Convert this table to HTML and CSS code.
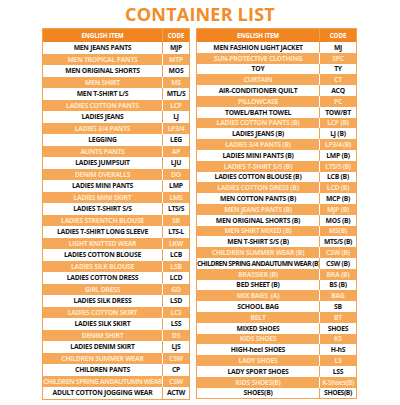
FILE: index.html
```html
<!DOCTYPE html>
<html lang="en">
<head>
    <meta charset="UTF-8">
    <meta name="viewport" content="width=device-width, initial-scale=1.0">
    <title>Container List</title>
    <link rel="stylesheet" href="styles.css">
</head>
<body>
    <h1 class="title">CONTAINER LIST</h1>
    <div class="tables">
        <table class="list list-left">
            <colgroup><col class="col-item"><col class="col-code"></colgroup>
            <thead><tr><th>ENGLISH ITEM</th><th>CODE</th></tr></thead>
            <tbody>
                <tr><td>MEN JEANS PANTS</td><td>MJP</td></tr>
                <tr><td>MEN TROPICAL PANTS</td><td>MTP</td></tr>
                <tr><td>MEN ORIGINAL SHORTS</td><td>MOS</td></tr>
                <tr><td>MEN SHIRT</td><td>MS</td></tr>
                <tr><td>MEN T-SHIRT L/S</td><td class="tight">MTL/S</td></tr>
                <tr><td>LADIES COTTON PANTS</td><td>LCP</td></tr>
                <tr><td>LADIES JEANS</td><td>LJ</td></tr>
                <tr><td>LADIES 3/4 PANTS</td><td class="tight">LP3/4</td></tr>
                <tr><td>LEGGING</td><td>LEG</td></tr>
                <tr><td>AUNTS PANTS</td><td>AP</td></tr>
                <tr><td>LADIES JUMPSUIT</td><td>LJU</td></tr>
                <tr><td>DENIM OVERALLS</td><td>DO</td></tr>
                <tr><td>LADIES MINI PANTS</td><td>LMP</td></tr>
                <tr><td>LADIES MINI SKIRT</td><td>LMS</td></tr>
                <tr><td>LADIES T-SHIRT S/S</td><td class="tight">LTS/S</td></tr>
                <tr><td>LADIES STRENTCH BLOUSE</td><td>SB</td></tr>
                <tr><td>LADIES T-SHIRT LONG SLEEVE</td><td class="tight">LTS-L</td></tr>
                <tr><td>LIGHT KNITTED WEAR</td><td>LKW</td></tr>
                <tr><td>LADIES COTTON BLOUSE</td><td>LCB</td></tr>
                <tr><td>LADIES SILK BLOUSE</td><td>LSB</td></tr>
                <tr><td>LADIES COTTON DRESS</td><td>LCD</td></tr>
                <tr><td>GIRL DRESS</td><td>GD</td></tr>
                <tr><td>LADIES SILK DRESS</td><td>LSD</td></tr>
                <tr><td>LADIES COTTON SKIRT</td><td>LCS</td></tr>
                <tr><td>LADIES SILK SKIRT</td><td>LSS</td></tr>
                <tr><td>DENIM SHIRT</td><td>DS</td></tr>
                <tr><td>LADIES DENIM SKIRT</td><td>LJS</td></tr>
                <tr><td>CHILDREN SUMMER WEAR</td><td>CSW</td></tr>
                <tr><td>CHILDREN PANTS</td><td>CP</td></tr>
                <tr><td class="tight">CHILDREN SPRING ANDAUTUMN WEAR</td><td>CSW</td></tr>
                <tr><td>ADULT COTTON JOGGING WEAR</td><td class="tight">ACTW</td></tr>
            </tbody>
        </table>
        <table class="list list-right">
            <colgroup><col class="col-item"><col class="col-code"></colgroup>
            <thead><tr><th>ENGLISH ITEM</th><th>CODE</th></tr></thead>
            <tbody>
                <tr><td>MEN FASHION LIGHT JACKET</td><td>MJ</td></tr>
                <tr><td>SUN-PROTECTIVE CLOTHING</td><td>SPC</td></tr>
                <tr><td>TOY</td><td>TY</td></tr>
                <tr><td>CURTAIN</td><td>CT</td></tr>
                <tr><td>AIR-CONDITIONER QUILT</td><td>ACQ</td></tr>
                <tr><td>PILLOWCASE</td><td>PC</td></tr>
                <tr><td>TOWEL/BATH TOWEL</td><td>TOW/BT</td></tr>
                <tr><td>LADIES COTTON PANTS (B)</td><td>LCP (B)</td></tr>
                <tr><td>LADIES JEANS (B)</td><td>LJ (B)</td></tr>
                <tr><td>LADIES 3/4 PANTS (B)</td><td class="tight">LP3/4 (B)</td></tr>
                <tr><td>LADIES MINI PANTS (B)</td><td>LMP (B)</td></tr>
                <tr><td>LADIES T-SHIRT S/S (B)</td><td class="tight">LTS/S (B)</td></tr>
                <tr><td>LADIES COTTON BLOUSE (B)</td><td>LCB (B)</td></tr>
                <tr><td>LADIES COTTON DRESS (B)</td><td>LCD (B)</td></tr>
                <tr><td>MEN COTTON PANTS (B)</td><td>MCP (B)</td></tr>
                <tr><td>MEN JEANS PANTS (B)</td><td>MJP (B)</td></tr>
                <tr><td>MEN ORIGINAL SHORTS (B)</td><td>MOS (B)</td></tr>
                <tr><td>MEN SHIRT MIXED (B)</td><td>MS(B)</td></tr>
                <tr><td>MEN T-SHIRT S/S (B)</td><td class="tight">MTS/S (B)</td></tr>
                <tr><td>CHILDREN SUMMER WEAR (B)</td><td>CSW (B)</td></tr>
                <tr><td class="tighter">CHILDREN SPRING ANDAUTUMN WEAR (B)</td><td>CSW (B)</td></tr>
                <tr><td>BRASSIER (B)</td><td>BRA (B)</td></tr>
                <tr><td>BED SHEET (B)</td><td>BS (B)</td></tr>
                <tr><td>MIX BAGS &nbsp;(A)</td><td>BAG</td></tr>
                <tr><td>SCHOOL BAG</td><td>SB</td></tr>
                <tr><td>BELT</td><td>BT</td></tr>
                <tr><td>MIXED SHOES</td><td>SHOES</td></tr>
                <tr><td>KIDS SHOES</td><td>KS</td></tr>
                <tr><td>HIGH-heel SHOES</td><td>H-hS</td></tr>
                <tr><td>LADY SHOES</td><td>LS</td></tr>
                <tr><td>LADY SPORT SHOES</td><td>LSS</td></tr>
                <tr><td>KIDS SHOES(B)</td><td class="tight">K-Shoes(B)</td></tr>
                <tr><td>SHOES(B)</td><td class="tight">SHOES(B)</td></tr>
            </tbody>
        </table>
    </div>
</body>
</html>
```

FILE: styles.css
```css
:root {
    --orange-dark: #f08522;
    --orange-row: #f5a958;
    --orange-text: #fde7cb;
    --orange-line: #f3a04f;
    --ink: #151515;
}

body {
    margin: 0;
    background: #fff;
    font-family: "Open Sans", "Liberation Sans", sans-serif;
}

.title {
    margin: 0;
    height: 28px;
    line-height: 28px;
    text-align: center;
    font-size: 18px;
    font-weight: 700;
    color: #f28c26;
    letter-spacing: 0.2px;
}

.tables {
    display: flex;
    align-items: flex-start;
    gap: 6px;
    padding-left: 42px;
}

/* Tables */
.list {
    border-collapse: collapse;
    table-layout: fixed;
    border: 1px solid var(--orange-line);
}

.list-left {
    width: 148px;
}

.list-left .col-code {
    width: 27px;
}

.list-right {
    width: 161px;
}

.list-right .col-code {
    width: 37px;
}

.list th,
.list td {
    padding: 0;
    text-align: center;
    white-space: nowrap;
    overflow: hidden;
    font-weight: 700;
    font-size: 6.8px;
    letter-spacing: -0.25px;
    border-left: 1px solid var(--orange-line);
}

.list th:first-child,
.list td:first-child {
    border-left: none;
}

.list th {
    height: 13px;
    background: var(--orange-dark);
    color: #fff;
    font-size: 6.2px;
    letter-spacing: -0.1px;
}

.list td {
    color: var(--ink);
    background: #fff;
}

.list td.tight {
    letter-spacing: -0.4px;
}

.list td.tighter {
    letter-spacing: -0.55px;
}

.list tbody tr:nth-child(even) td {
    background: var(--orange-row);
    color: var(--orange-text);
    border-left-color: #fff;
}

.list-left td {
    height: 11.5px;
}

.list-right td {
    height: 10.8px;
}
```
